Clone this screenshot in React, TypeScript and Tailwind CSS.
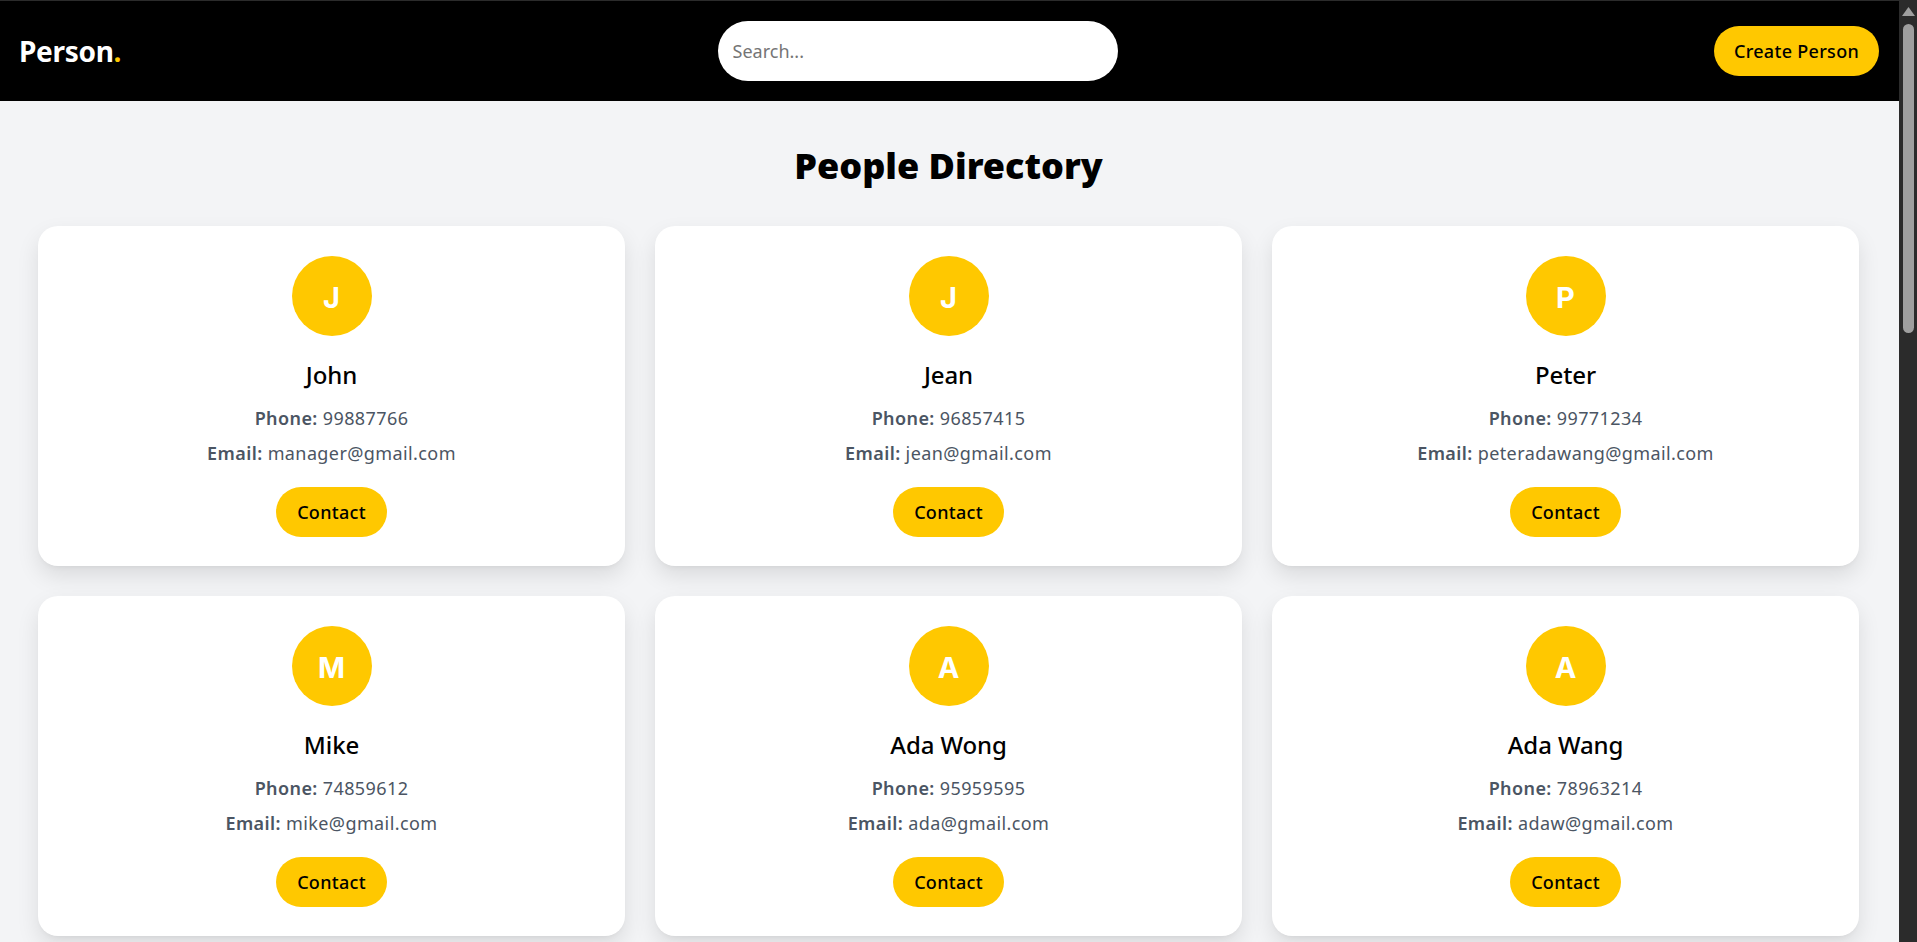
const people = [
  { name: "John", phone: "99887766", email: "manager@gmail.com" },
  { name: "Jean", phone: "96857415", email: "jean@gmail.com" },
  { name: "Peter", phone: "99771234", email: "peteradawang@gmail.com" },
  { name: "Mike", phone: "74859612", email: "mike@gmail.com" },
  { name: "Ada Wong", phone: "95959595", email: "ada@gmail.com" },
  { name: "Ada Wang", phone: "78963214", email: "adaw@gmail.com" },
]

function Card({ name, phone, email }: { name: string; phone: string; email: string }) {
  return (
    <div className="flex h-[340px] flex-col items-center rounded-[20px] bg-white pt-[30px] shadow-[0_10px_22px_rgba(0,0,0,0.1),0_4px_6px_-4px_rgba(0,0,0,0.08)]">
      <div className="flex h-20 w-20 items-center justify-center rounded-full bg-[#ffc800] pt-[3px] font-['Inter',sans-serif] text-[29px] font-bold text-white">
        {name[0]}
      </div>
      <h3 className="mt-[22px] text-[24px] leading-[34px] font-[550] tracking-[-0.1px] text-black">{name}</h3>
      <p className="mt-[12px] text-[18px] leading-[28px] tracking-[0.4px] text-[#4b5563]">
        <strong className="font-semibold">Phone:</strong> {phone}
      </p>
      <p className="mt-[7px] text-[18px] leading-[28px] tracking-[0.4px] text-[#4b5563]">
        <strong className="font-semibold">Email:</strong> {email}
      </p>
      <button className="mt-[20px] h-[50px] w-[111px] rounded-full bg-[#ffc800] text-[18px] font-[550] tracking-[0.3px] text-black">
        Contact
      </button>
    </div>
  )
}

export default function App() {
  return (
    <div className="flex h-[942px] overflow-hidden bg-[#f3f4f6] font-['Noto_Sans',sans-serif]">
      <div className="flex min-w-0 flex-1 flex-col">
        <div className="h-px bg-[#2b2b2b]" />
        <header className="flex h-[100px] items-center justify-between bg-black px-5">
          <div className="-ml-px text-[28px] font-bold tracking-[-0.3px] text-white">
            Person<span className="text-[#ffc800]">.</span>
          </div>
          <input
            placeholder="Search..."
            className="h-[60px] w-[400px] rounded-full bg-white px-[15px] text-[18px] outline-none placeholder:text-[#757575]"
          />
          <button className="h-[50px] w-[165px] rounded-full bg-[#ffc800] text-[18px] font-medium tracking-[0.3px] text-black">
            Create Person
          </button>
        </header>
        <main className="pr-[40px] pl-[38px]">
          <h1 className="mt-[40px] text-center text-[36px] leading-[50px] font-black text-black">People Directory</h1>
          <div className="mt-[35px] grid grid-cols-3 gap-[30px]">
            {people.map((p) => (
              <Card key={p.name} {...p} />
            ))}
          </div>
        </main>
      </div>
      <div className="flex h-full w-[18px] shrink-0 flex-col items-center bg-[#2b2b2b]">
        <svg width="13" height="9" viewBox="0 0 13 9" className="mt-[7px]">
          <path d="M6.5 0 L13 9 L0 9 Z" fill="#9f9f9f" />
        </svg>
        <div className="mt-[8px] h-[309px] w-[11px] rounded-full bg-[#9f9f9f]" />
      </div>
    </div>
  )
}
